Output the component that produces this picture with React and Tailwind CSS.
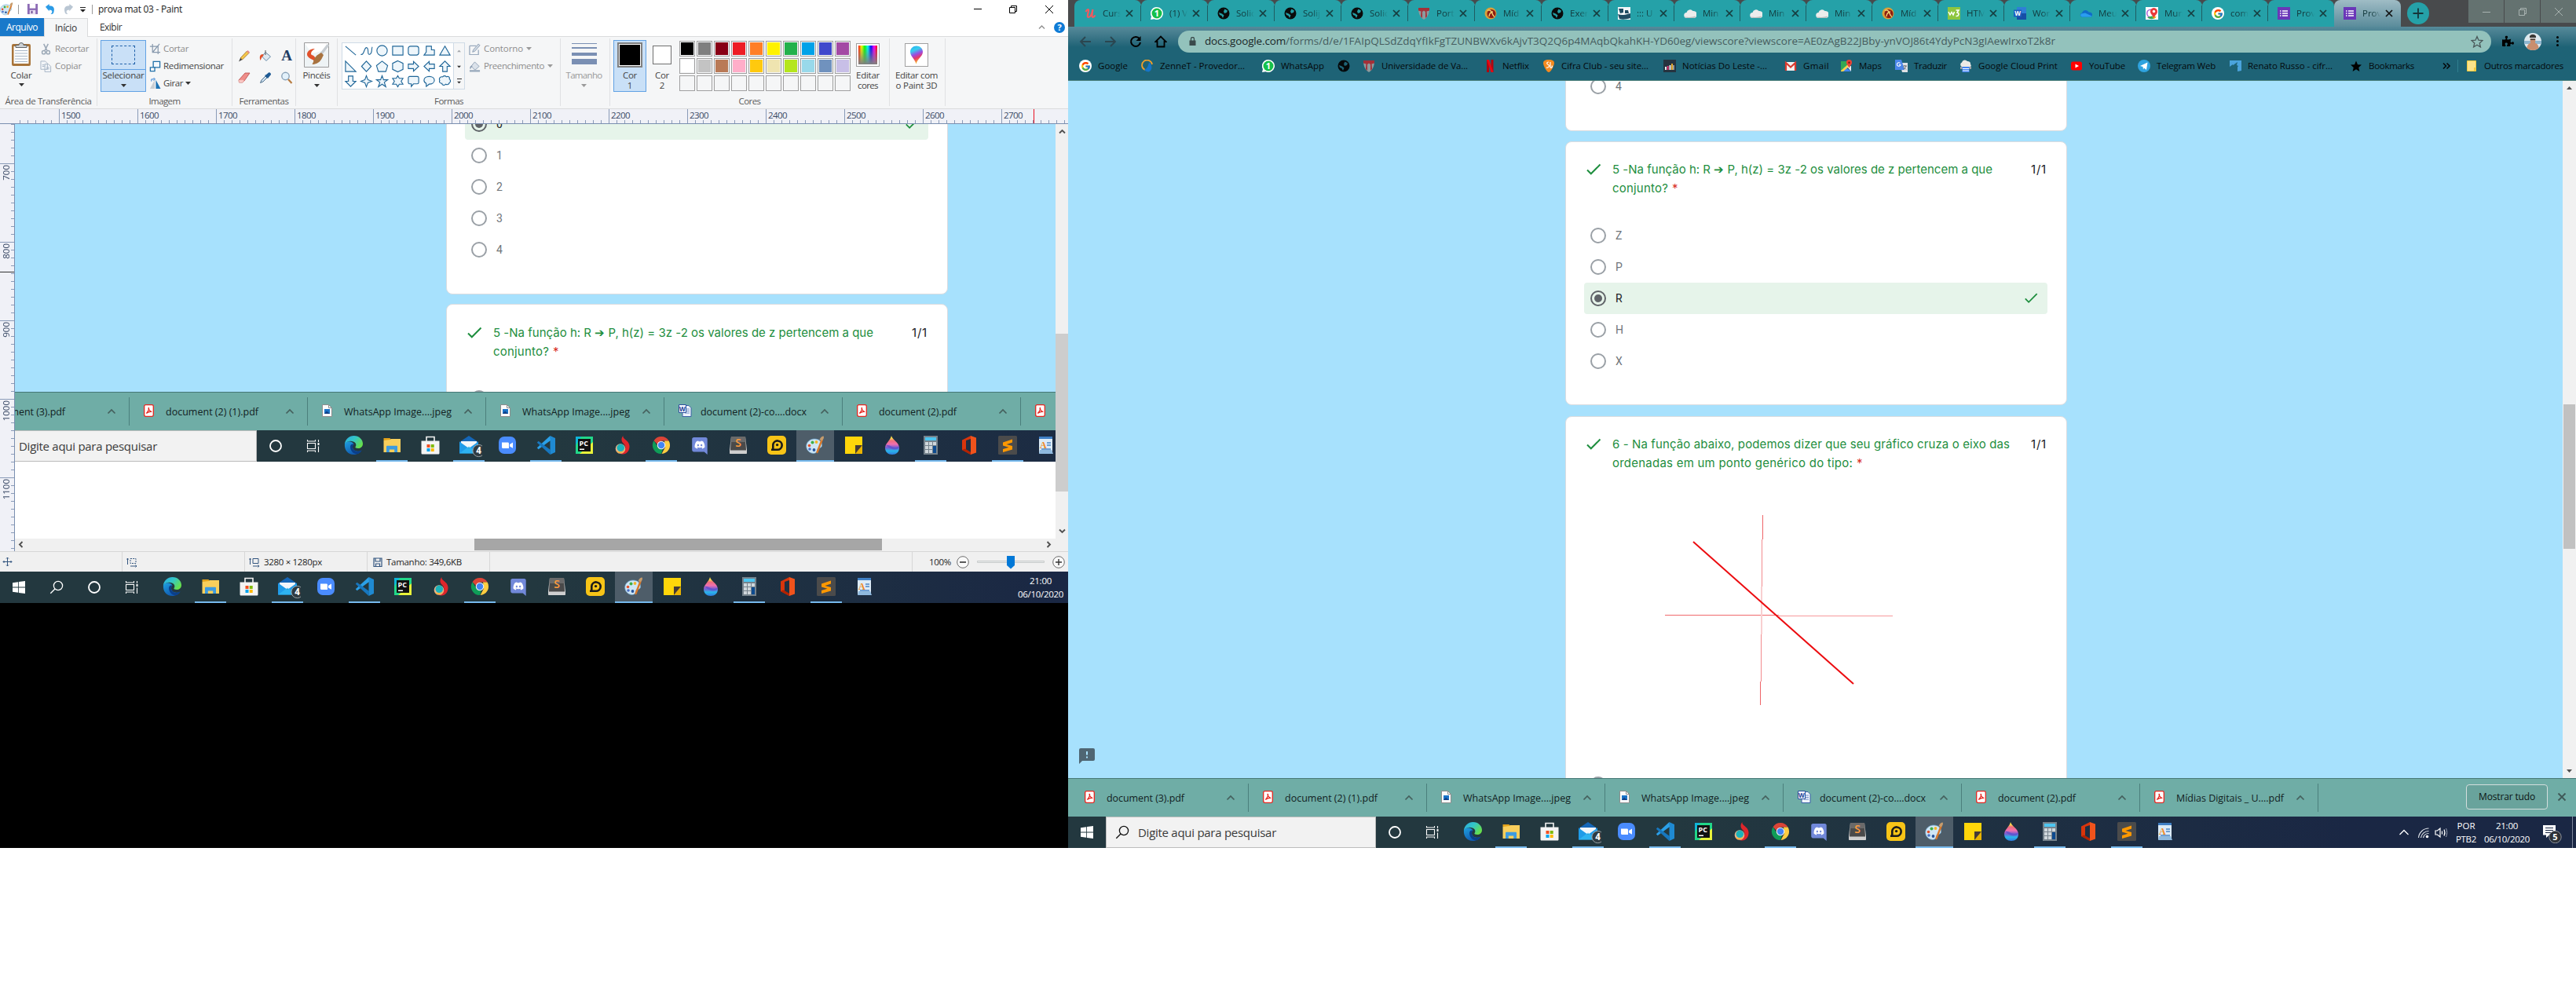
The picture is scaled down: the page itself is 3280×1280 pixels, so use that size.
import React, { useLayoutEffect, useRef, useState } from "react";
import { FcGoogle } from "react-icons/fc";
import { FaDiscord, FaPuzzlePiece } from "react-icons/fa";

/* Text that spreads its letters to occupy a given width. */
function T({ w, className = "", children }) {
  const ref = useRef(null);
  const [ls, setLs] = useState(0);
  useLayoutEffect(() => {
    if (!w) return;
    const el = ref.current;
    const natural = el.getBoundingClientRect().width;
    setLs((w - natural) / el.textContent.length);
  }, []);
  return (
    <span ref={ref} className={"block w-fit whitespace-pre " + className} style={{ letterSpacing: ls + "px" }}>
      {children}
    </span>
  );
}

const Svg = ({ s = 24, vb = 24, className = "", children }) => (
  <svg width={s} height={s} viewBox={`0 0 ${vb} ${vb}`} className={"shrink-0 " + className} fill="none">
    {children}
  </svg>
);

/* ---------- taskbar icons ---------- */
const Win = () => (
  <Svg s={16} vb={16}>
    <path fill="#fff" d="M0 2.3 7.2 1.2V7.6H0zM8 1.1 16 0v7.6H8zM0 8.4h7.2v6.4L0 13.7zM8 8.4h8V16l-8-1.1z" />
  </Svg>
);
const Search = ({ c = "#fff" }) => (
  <Svg s={18} vb={18}>
    <circle cx="11" cy="7" r="5.6" stroke={c} strokeWidth="1.3" />
    <path d="M7 11 1.3 16.8" stroke={c} strokeWidth="1.3" />
  </Svg>
);
const Cortana = () => (
  <Svg s={18} vb={18}><circle cx="9" cy="9" r="7" stroke="#fff" strokeWidth="1.8" /></Svg>
);
const TaskView = () => (
  <Svg s={18} vb={18}>
    <path d="M1.5 5.5h10v7h-10zM1.5 1v2h10V1M1.5 17v-2h10v2M15.5 1v3M15.5 9.5V17" stroke="#fff" strokeWidth="1.1" />
    <path d="M14.5 5h2v3h-2z" fill="#fff" />
  </Svg>
);
const Edge = () => (
  <Svg>
    <defs>
      <linearGradient id="eg" x1="0" y1="0" x2="1" y2="0.6"><stop stopColor="#2aa9e0" /><stop offset=".5" stopColor="#33c6c9" /><stop offset="1" stopColor="#66df4c" /></linearGradient>
      <linearGradient id="eb" x1="0" y1="0" x2="0.6" y2="1"><stop stopColor="#1fa0e0" /><stop offset="1" stopColor="#0f55ad" /></linearGradient>
    </defs>
    <path fill="url(#eb)" d="M1 10C0 18 5 24 12.5 24c4.500 0 8.300-2.300 10-5.500-4.500 2.500-11.500 1.200-11.500-4.500 0-1.500.7-2.700 1.500-3.500C9.500 6 3 6.500 1 10z" />
    <path fill="#0b3f8a" d="M8 14c0 5 4 9.500 9 9.300 2.500-.8 4.500-2.600 5.500-4.800-5 3-12 1-11.500-4.500.1-1.200.6-2.500 1.500-3.300C10 9.800 8 11.600 8 14z" />
    <path fill="url(#eg)" d="M.8 10.500C1.800 4.500 6.500 0 12.500 0 19.500 0 24 5 24 10c0 4-3 6-6 6-2.500 0-4-.9-3.600-1.700 1.300-1.500 1.200-3.300.3-4.800C12 5.800 4 5.500.8 10.500z" />
  </Svg>
);
const Folder = () => (
  <Svg>
    <path fill="#e3a21a" d="M1.500 3h8l2 3h-10z" />
    <path fill="#f9cf5c" d="M1.500 6 9.500 5l1.500-1h12v17h-21.500z" />
    <path fill="#3d9be0" d="M5 21v-7c0-.8.500-1.200 1.200-1.200h11.600c.8 0 1.200.4 1.200 1.200v7h-3.800v-3.500H8.800V21z" />
  </Svg>
);
const Store = () => (
  <Svg>
    <path d="M7 7V1.500h10V7" stroke="#f3f3f3" strokeWidth="1.6" />
    <path fill="#f4f4f4" d="M.5 6.500h23V22c0 1-.6 1.500-1.500 1.500H2c-1 0-1.500-.5-1.500-1.500z" />
    <path fill="#f25022" d="M7.500 11h4v4h-4z" /><path fill="#7fba00" d="M12.700 11h4v4h-4z" />
    <path fill="#00a4ef" d="M7.500 16h4v4h-4z" /><path fill="#ffb900" d="M12.700 16h4v4h-4z" />
  </Svg>
);
const Mail = () => (
  <Svg s={34} vb={34}>
    <path fill="#1566b7" d="M5 13 17 5l12 8v3H5z" />
    <path fill="#f2f6fa" d="M7 12h20v8H7z" />
    <path fill="#1f9be8" d="M5 12.500 17 21l12-8.500V27.500H5z" />
    <path fill="#35bdf5" d="m5 27.500 12-9 12 9z" opacity=".7" />
    <circle cx="29.500" cy="24" r="7.600" fill="#2f3b41" stroke="#9aa3a7" strokeWidth="1" />
    <text x="29.500" y="28.200" textAnchor="middle" fontFamily="Open Sans, sans-serif" fontSize="11.500" fontWeight="700" fill="#fff">4</text>
  </Svg>
);
const Zoom = () => (
  <Svg>
    <rect x="1" y="1" width="22" height="22" rx="7" fill="#4a8cff" />
    <path fill="#fff" d="M5 8.500h7.500c1 0 1.500.6 1.500 1.500v6H6.500C5.500 16 5 15.300 5 14.500zM15 11l4-2.500v7.300L15 13.500z" />
  </Svg>
);
const VSCode = () => (
  <Svg>
    <path fill="#1f8ad2" d="M17.500 0 24 3v18l-6.500 3z" />
    <path fill="#2ba0e8" d="M17.500 0 .8 15.300l1.800 2L18 6z" />
    <path fill="#1777bf" d="M17.500 24 .8 8.700l1.800-2L18 18z" />
  </Svg>
);
const PyCharm = () => (
  <Svg>
    <path fill="#21d789" d="M1 1h22v22H1z" /><path fill="#0fb5d8" d="M1 1h7L1 12z" /><path fill="#e8f23a" d="M23 8v15H6z" />
    <path fill="#111" d="M4 4h16v16H4z" /><path fill="#fff" d="M6 16.500h6V18H6z" />
    <text x="5.500" y="12.800" fontFamily="Open Sans, sans-serif" fontSize="9" fontWeight="700" fill="#fff">PC</text>
  </Svg>
);
const Torch = () => (
  <Svg>
    <path fill="#e0262b" d="M12.500 0c-1.500 4 7.500 5.500 8 13 .2 6-3.500 10.500-8.500 10.500-1.500 0-3-.4-4.200-1 8-1 9.700-8 5.200-12.500C9.500 7 10 2.500 12.500 0z" />
    <circle cx="9" cy="16.500" r="6.300" fill="#e9b48a" /><circle cx="9.300" cy="15.300" r="4.800" fill="#1bb3ba" />
    <path fill="#f6b22a" d="M4 19c3 2.500 8 2 10-1-.5 4-8.500 6-10 1z" />
  </Svg>
);
const Chrome = () => (
  <Svg>
    <path fill="#db4437" d="M12 1a11 11 0 0 1 9.600 5.500H12L7 11 2.600 6.300A11 11 0 0 1 12 1z" />
    <path fill="#ffcd40" d="M21.600 6.500A11 11 0 0 1 12.500 23l4.500-8.500-1-8z" />
    <path fill="#0f9d58" d="M2.500 6.300 8 15l6 1.500L12 23A11 11 0 0 1 2.500 6.300z" />
    <circle cx="12" cy="12" r="5.300" fill="#f1f1f1" /><circle cx="12" cy="12" r="4.200" fill="#4285f4" />
  </Svg>
);
const Discord = () => (
  <Svg>
    <path fill="#7289da" d="M4.500 2h15c1.300 0 2.200 1 2.200 2.200V24l-4-3.500H4.500C3.200 20.500 2.200 19.500 2.200 18V4.200C2.200 3 3.200 2 4.500 2z" />
    <FaDiscord x="5" y="4.500" size={14} color="#fff" />
  </Svg>
);
const SublimeOld = () => (
  <Svg>
    <path fill="#cfcfcf" d="M1 18 3 1h18l2 17v4c0 .7-.5 1-1 1H2c-.6 0-1-.4-1-1z" />
    <path fill="#4a4a4a" d="M3 1h18l1 17.500H2z" /><path fill="#6a6a6a" d="M3 1h18l.4 7H2.600z" />
    <text x="12" y="14" textAnchor="middle" fontFamily="Open Sans, sans-serif" fontSize="14" fontWeight="600" fill="#ff9a3c">S</text>
  </Svg>
);
const LDPlayer = () => (
  <Svg>
    <rect width="24" height="24" rx="5" fill="#f7c417" />
    <path d="M7.300 18.500v-7a5.700 5.700 0 1 1 5.500 6.300H5" stroke="#1b1b1b" strokeWidth="2.600" />
    <circle cx="12.600" cy="11.600" r="1.700" fill="#1b1b1b" />
  </Svg>
);
const PaintIcon = ({ s = 24 }) => (
  <Svg s={s}>
    <path fill="#cfe6f5" stroke="#6ba6cf" strokeWidth=".7" d="M11 4c6 0 10 3.500 9.500 8.500-.3 3-3 3-4.500 3.200-1.600.3-1 2.300-1.700 4.300-.7 2-4 3-7.300 2C3 20.500.700 17 .7 13 .8 8 5.500 4 11 4z" />
    <circle cx="8.500" cy="8.500" r="2" fill="#3fae49" /><circle cx="13.500" cy="8" r="1.900" fill="#f3b52a" />
    <circle cx="4.500" cy="12.500" r="1.800" fill="#e2512b" /><circle cx="5" cy="17" r="1.800" fill="#4a6fc4" /><circle cx="10.500" cy="18" r="1.900" fill="#26549c" />
    <path d="M20.500 5.500 14.500 21" stroke="#d9792b" strokeWidth="2.400" strokeLinecap="round" />
    <path d="M17.500 5c1-3 3-4.500 5.200-4.600.8 2-.2 4.600-2.500 5.900z" fill="#c69c6d" />
  </Svg>
);
const Sticky = () => (
  <Svg><path fill="#ffd60a" d="M1 1h22v11l-9 11H1z" /><path fill="#453a36" d="M14 12h9l-9 11z" /><path fill="#e9b300" d="M23 12v11h-9z" /></Svg>
);
const Drop = () => (
  <Svg>
    <defs><linearGradient id="dp" x1="0" y1="0" x2="0" y2="1"><stop offset=".12" stopColor="#ffe14a" /><stop offset=".26" stopColor="#ef6e7b" /><stop offset=".45" stopColor="#f06fb0" /><stop offset=".62" stopColor="#7b5bd0" /><stop offset=".8" stopColor="#29b6ea" /><stop offset="1" stopColor="#2f7be0" /></linearGradient></defs>
    <path fill="url(#dp)" d="M11 0c1 5 10 8.500 10 15.500 0 5-4 8.500-9 8.500s-9-3.500-9-8.500C3 10 9.500 6 11 0z" />
    <path fill="#5a50cf" opacity=".75" d="M4 12c5-2 9 6 17 1.500C21 18 12 20 4 12z" />
  </Svg>
);
const Calc = () => (
  <Svg>
    <path fill="#75828c" d="M3 0h18v24H3z" /><path fill="#4dc5f0" d="M5 2h14v4H5z" />
    <path fill="#cfd6db" d="M5 8h4v4H5zM10 8h4v4h-4zM15 8h4v4h-4zM5 13h4v4H5zM10 13h4v4h-4zM5 18h4v4H5zM10 18h4v4h-4z" />
    <path fill="#0d4a8f" d="M15 13h4v9h-4z" />
  </Svg>
);
const Office = () => (
  <Svg><path fill="#d8350c" d="M3 5.500 14 0v4L8 6v12l6 3v3L3 18z" /><path fill="#b32200" d="M3 18l4-1.500 7 4.500v3z" /><path fill="#f0531c" d="M14 0l7 2.500v19L14 24z" /></Svg>
);
const Sublime = () => (
  <Svg><rect width="24" height="24" rx="1.500" fill="#4b4b4b" /><path fill="#ff9800" d="M6 8.500 18 4.500v4L10.500 11 18 13v4.500L6 21v-4l7.500-2.300L6 12.500z" /></Svg>
);
const WordPad = () => (
  <Svg>
    <path fill="#dcebf7" d="M3 1h17v21H3z" /><path fill="#3f7fc4" d="M3 1h17v3H3z" /><path fill="#8fb9de" d="M4 18h15l2 5H3z" />
    <path d="M13 9h5M13 12h5M6 17h12" stroke="#4c86c6" strokeWidth="1.300" />
    <text x="4" y="15.500" fontFamily="Liberation Serif, serif" fontSize="12" fontWeight="700" fill="#f08a24">A</text>
  </Svg>
);

const APPS = [
  [Edge], [Folder, 1], [Store], [Mail, 1], [Zoom], [VSCode, 1], [PyCharm], [Torch], [Chrome, 1], [Discord], [SublimeOld],
  [LDPlayer], [PaintIcon, 2], [Sticky], [Drop], [Calc, 1], [Office], [Sublime, 1], [WordPad],
];
const Slot = ({ children }) => <div className="flex h-10 w-12 shrink-0 items-center justify-center">{children}</div>;

function Apps() {
  return (
    <div className="ml-[3px] flex gap-px">
      {APPS.map(([I, on], i) => (
        <div key={i} className={"flex h-10 w-12 shrink-0 flex-col items-center " + (on === 2 ? "bg-[#4e5d69]" : "")}>
          <div className="flex h-[38px] w-12 items-center justify-center"><I /></div>
          {on ? <div className={"h-[2px] bg-[#76b9ed] " + (on === 2 ? "w-12" : "w-10")} /> : null}
        </div>
      ))}
    </div>
  );
}

const Clock = () => (
  <div className="flex w-[58px] flex-col items-center text-[11.5px] leading-[17.5px] text-white">
    <T w={28}>21:00</T>
    <T w={58}>06/10/2020</T>
  </div>
);

function TaskbarWide() {
  return (
    <div className="flex h-10 w-[1920px] shrink-0 bg-linear-to-r from-[#23383f] from-40% to-[#1a2744] to-85%">
      <Slot><Win /></Slot>
      <div className="flex h-10 w-[344px] items-center border border-[#bcbcbc] bg-[#f2f2f2] pl-[11px]">
        <Search c="#111" />
        <T w={176} className="ml-[11px] text-[15px] leading-5 text-[#3a3a3a]">Digite aqui para pesquisar</T>
      </div>
      <Slot><Cortana /></Slot>
      <Slot><TaskView /></Slot>
      <Apps />
      <div className="ml-[273px] flex items-center text-white">
        <Svg s={14} vb={14}><path d="M1.500 10 7 4.500 12.500 10" stroke="#fff" strokeWidth="1.300" /></Svg>
        <Svg s={16} vb={16} className="ml-[10px]">
          <path d="M1.500 15A13 13 0 0 1 14.500 3M4.500 15A10 10 0 0 1 14.500 6.500M7.500 15a7 7 0 0 1 7-5.500" stroke="#dfe3e8" strokeWidth="1.200" />
          <circle cx="12.500" cy="13.500" r="1.800" fill="#fff" />
        </Svg>
        <Svg s={17} vb={17} className="ml-[6px]">
          <path d="M1 6h2.500L7 3v11L3.500 11H1zM9.500 6.500v4M12 4.500c1.200 2.500 1.200 5.500 0 8" stroke="#fff" strokeWidth="1.200" />
          <path d="M14.500 3c1.700 3.500 1.700 7.500 0 11" stroke="#9aa3b5" />
        </Svg>
        <div className="ml-[10px] flex w-[26px] flex-col items-center text-[11.5px] leading-[17.5px]">
          <T w={23}>POR</T>
          <T w={26}>PTB2</T>
        </div>
        <div className="ml-[10px]"><Clock /></div>
        <Svg s={28} vb={28} className="ml-[15px]">
          <path fill="#fff" d="M2 5h16v12.500H10L6 21v-3.500H2z" /><path d="M5 8.500h10M5 11.500h10M5 14.500h7" stroke="#1a2744" />
          <circle cx="17.500" cy="20" r="7.700" fill="#2c3036" stroke="#8c919b" />
          <text x="17.500" y="24" textAnchor="middle" fontFamily="Open Sans, sans-serif" fontSize="11" fontWeight="700" fill="#fff">5</text>
        </Svg>
      </div>
      <div className="ml-auto mr-[4px] h-10 w-px bg-[#7d869a]" />
    </div>
  );
}

/* ---------- download bar ---------- */
const Pdf = () => (
  <svg width="13" height="16" viewBox="0 0 13 16" fill="none" className="shrink-0">
    <rect x=".7" y=".7" width="11.600" height="14.600" rx="1.800" fill="#fff" stroke="#e5251f" strokeWidth="1.300" />
    <path d="M6.300 4c1.200 2-1.500 6-3 7.500M6.300 4c-1 1.500 1.500 5 4 5.500-2.300-.6-4.500 0-7 2" stroke="#e5251f" strokeWidth="1.200" />
  </svg>
);
const Jpeg = () => (
  <svg width="13" height="16" viewBox="0 0 13 16" fill="none" className="shrink-0">
    <path d="M.5.500h8l4 4v11H.5z" fill="#fbfbfb" stroke="#8d8d8d" /><path d="M8.500.5v4h4" stroke="#8d8d8d" />
    <path fill="#1a73c8" d="M3 6h7v6H3z" /><path fill="#123f86" d="M3 12l3-3.500L10 12z" />
  </svg>
);
const Docx = () => (
  <svg width="17" height="16" viewBox="0 0 17 16" fill="none" className="shrink-0">
    <path d="M5 1.500h8l3 3V15.500H5z" fill="#eef3fb" stroke="#3a5fa6" /><path d="M8 6h6M8 8.500h6M8 11h6" stroke="#6d8cc7" />
    <path d="M.5.500h9v10h-9z" fill="#f6f9ff" stroke="#2b4f9c" />
    <text x="1" y="8.500" fontFamily="Open Sans, sans-serif" fontSize="8" fontWeight="700" fill="#1f4396">W</text>
  </svg>
);
const FILES = [
  [Pdf, "document (3).pdf", 99], [Pdf, "document (2) (1).pdf", 118], [Jpeg, "WhatsApp Image....jpeg", 137], [Jpeg, "WhatsApp Image....jpeg", 137],
  [Docx, "document (2)-co....docx", 135], [Pdf, "document (2).pdf", 99], [Pdf, "Mídias Digitais _ U....pdf", 137],
];
function Downloads() {
  return (
    <div className="flex h-[49px] w-[1920px] shrink-0 border-t border-[#467876] bg-[#6fada6] pl-[3px]">
      {FILES.map(([I, name, w], i) => (
        <div key={i} className="mt-[6px] flex h-9 w-[227px] shrink-0 border-r border-[#4b7f7c] pt-[9px]">
          <div className="ml-[18px] w-7 shrink-0"><I /></div>
          <div className="w-[152px] shrink-0"><T w={w} className="text-[12.5px] leading-[20px] text-[#12211f]">{name}</T></div>
          <Svg s={12} vb={12} className="mt-[3px]"><path d="M1.500 8.500 6 4l4.500 4.500" stroke="#45605d" strokeWidth="1.700" /></Svg>
        </div>
      ))}
      <div className="ml-[188px] mt-[7px] flex h-8 w-[104px] items-center justify-center rounded border border-[#d3dedd] bg-[#69a39c]">
        <T w={72} className="text-[12px] leading-5 text-[#0b1413]">Mostrar tudo</T>
      </div>
      <Svg s={12} vb={12} className="ml-[12px] mt-[17px]"><path d="m1.500 1.500 9 9m0-9-9 9" stroke="#3f5957" strokeWidth="1.900" /></Svg>
    </div>
  );
}

/* ---------- form ---------- */
const Check = ({ className = "" }) => (
  <svg width="24" height="24" viewBox="0 0 24 24" fill="none" className={"shrink-0 " + className}>
    <path d="M4 12.500 8.800 17.300 20.500 5.500" stroke="#1e8e3e" strokeWidth="2" />
  </svg>
);
function Option({ label, on }) {
  return (
    <div className={"flex h-10 w-[590px] items-center rounded pl-2 pr-[9px] " + (on ? "bg-[#e6f4ea]" : "")}>
      <div className={"flex size-5 items-center justify-center rounded-full border-2 " + (on ? "border-[#5f6368]" : "border-[#9aa0a6]")}>
        {on ? <div className="size-[10px] rounded-full bg-[#5f6368]" /> : null}
      </div>
      <span className={"ml-3 font-[Roboto,sans-serif] text-[14px] leading-5 " + (on ? "text-[#202124]" : "text-[#70757a]")}>{label}</span>
      {on ? <Check className="ml-auto scale-90" /> : null}
    </div>
  );
}
function Question({ a, wa, b, wb }) {
  return (
    <div className="flex h-12 font-[Inter,sans-serif] text-[15px] leading-6 text-[#1e8e3e]">
      <Check />
      <div className="ml-3 w-[510px]">
        <T w={wa} className="h-6">{a}</T>
        <div className="flex h-6"><T w={wb}>{b}</T><span className="ml-[5px] text-[#d93025]">*</span></div>
      </div>
      <T w={20} className="ml-[23px] text-[#202124]">1/1</T>
    </div>
  );
}
const CARD = "w-[639px] rounded-lg border border-[#dadce0] bg-white pl-[23px]";
const Q5 = () => <Question a="5 -Na função h: R ➔ P, h(z) = 3z -2 os valores de z pertencem a que" wa={484} b="conjunto?" wb={71} />;

/* ---------- Paint ---------- */
const Tri = ({ c = "#333", className = "" }) => (
  <svg width="7" height="4" viewBox="0 0 7 4" className={"shrink-0 " + className}><path d="M0 0h7L3.500 4z" fill={c} /></svg>
);
const PT = ({ w, c = "text-[#444]", children }) => <T w={w} className={"text-[11.5px] leading-[14px] " + c}>{children}</T>;

const SHAPES = [
  "M2 3 16 15", "M1.500 14C6 16 6 4 9.500 5s0 10 4 9 2-8 3.500-10", "M2 9a7 7 0 1 0 14 0A7 7 0 1 0 2 9z", "M2 3h14v12H2z",
  "M5 3h8a3 3 0 0 1 3 3v6a3 3 0 0 1-3 3H5a3 3 0 0 1-3-3V6a3 3 0 0 1 3-3z", "M5 3h7v5h4v7H2l3-4z", "M9 3l7 12H2z",
  "M2 2v14h14z", "M9 2l6.500 7L9 16 2.500 9z", "M9 2l7.500 6-2.500 8H4L1.500 8z", "M9 1.500 16 5v8l-7 3.500L2 13V5z", "M2 6h7V2.500L16 9l-7 6.500V12H2z",
  "M16 6H9V2.500L2 9l7 6.500V12h7z", "M6 16V9H2l7-7 7 7h-4v7z",
  "M6 2v7H2l7 7 7-7h-4V2z", "M9 1.500 11 7l5.500 2L11 11l-2 5.500L7 11 1.500 9 7 7z", "M9 1.500l2 5.500h5.500L12 10.500l2 6L9 13l-5 3.500 2-6L1.500 7H7z",
  "M9 1.500l2 3.500h5L13.500 9 16 13h-5l-2 3.500L7 13H2l2.500-4L2 5h5z", "M4 2.500h10a2 2 0 0 1 2 2v6a2 2 0 0 1-2 2H9L6 16v-3.500H4a2 2 0 0 1-2-2v-6a2 2 0 0 1 2-2z",
  "M9 2.500c4 0 7 2.200 7 5.200s-3 5.200-7 5.200L5 16v-4C3 11 2 9.500 2 7.700c0-3 3-5.200 7-5.200z",
  "M6 3c2-2 4-1 5 0 2-1 5 0 4 3 2 1.500 2 4 0 5-.5 2.500-3 3-5 2-2 2-5 1.500-5-1-3-.5-4-2-3-4-1.500-3 1-5.500 4-5z",
];
const PAL = ["#000000", "#7f7f7f", "#880015", "#ed1c24", "#ff7f27", "#fff200", "#22b14c", "#00a2e8", "#3f48cc", "#a349a4",
  "#ffffff", "#c3c3c3", "#b97a57", "#ffaec9", "#ffc90e", "#efe4b0", "#b5e61d", "#99d9ea", "#7092be", "#c8bfe7"];

const Group = ({ className, label, lw, children }) => (
  <div className={"flex h-[91px] shrink-0 flex-col items-center " + className}>
    <div className="h-[75px] w-full">{children}</div>
    {label ? <PT w={lw} c="text-[#5a5a5a]">{label}</PT> : null}
  </div>
);
const Sep = () => <div className="mt-[2px] h-[86px] w-px shrink-0 bg-[#e0e1e3]" />;
const Thumb = ({ children }) => <div className="flex size-[30px] shrink-0 items-center justify-center border border-[#a0a0a0] bg-white p-[2px]">{children}</div>;

function Ribbon() {
  return (
    <div className="flex h-[91px] bg-[#f5f6f7]">
      <Group className="w-[123px]" label="Área de Transferência" lw={110}>
        <div className="flex">
          <div className="ml-[9px] flex w-9 flex-col items-center pt-[6px]">
            <svg width="26" height="32" viewBox="0 0 26 32" fill="none">
              <rect x="1" y="3" width="24" height="28" rx="2" fill="#a8743a" /><path fill="#fdfdfd" d="M3.500 6h19v22h-19z" />
              <path d="M5 11.500h16M5 15h16M5 18.500h16M5 22h16M5 25.500h16" stroke="#a9b7c7" strokeWidth="1" /><path d="M6 7.500V4.500h4a3 3 0 0 1 6 0h4v3z" fill="#cfd3d6" stroke="#5f6569" />
            </svg>
            <div className="mt-[4px]"><PT w={27}>Colar</PT></div>
            <Tri className="mt-[3px]" />
          </div>
          <div className="ml-[6px] flex flex-col pt-[4px]">
            <div className="flex h-[22px] items-center gap-[4px]">
              <Svg s={15} vb={16}><path d="M5 1l4.500 9M11 1 6.500 10" stroke="#9aa7b5" strokeWidth="1.600" /><circle cx="5" cy="12.500" r="2.300" stroke="#9aa7b5" strokeWidth="1.500" /><circle cx="11" cy="12.500" r="2.300" stroke="#9aa7b5" strokeWidth="1.500" /></Svg>
              <PT w={43} c="text-[#8d8d8d]">Recortar</PT>
            </div>
            <div className="flex h-[22px] items-center gap-[4px]">
              <Svg s={15} vb={16}><path d="M1 1h6l3 3v8H1zM6.500 5h5l3 3v7.500h-8z" fill="#f2f5f8" stroke="#a5b3c4" /><path d="M8.500 9.500h4M8.500 11.500h4M3 6h3M3 8h3" stroke="#a5b3c4" /></Svg>
              <PT w={34} c="text-[#8d8d8d]">Copiar</PT>
            </div>
          </div>
        </div>
      </Group>
      <Sep />
      <Group className="w-[171px]" label="Imagem" lw={40}>
        <div className="flex">
          <div className="ml-[4px] mt-[4px] flex h-[66px] w-[58px] flex-col items-center border border-[#62a2e4] bg-[#c9e0f7]">
            <div className="flex h-[37px] w-full shrink-0 items-center justify-center border-b border-[#62a2e4]">
              <div className="h-6 w-[30px] border border-dashed border-[#1d5fa8]" />
            </div>
            <div className="mt-0"><PT w={53}>Selecionar</PT></div>
            <Tri className="mt-[4px]" />
          </div>
          <div className="ml-[4px] flex flex-col pt-[4px]">
            <div className="flex h-[22px] items-center gap-[3px]">
              <Svg s={15} vb={16}><path d="M4.500 1v11.500H15M1 4.500h11V15M14 1 5 12" stroke="#8899ad" strokeWidth="1.300" /></Svg><PT w={32} c="text-[#8d8d8d]">Cortar</PT>
            </div>
            <div className="flex h-[22px] items-center gap-[3px]">
              <Svg s={15} vb={16}><path d="M5.500 1.500h9v8h-9z" fill="#f4f9fd" stroke="#2170a8" strokeWidth="1.400" /><path d="M1.500 9.500h6v5h-6z" fill="#fff" stroke="#2170a8" strokeWidth="1.400" /></Svg><PT w={77}>Redimensionar</PT>
            </div>
            <div className="flex h-[22px] items-center gap-[3px]">
              <Svg s={15} vb={16}><path d="M7.500 3 1 15h6.500z" fill="#c9ced3" /><path d="M9 3v12h6.500z" fill="#1f74b5" /><path d="M3 5V2h4M6 0l2 2-2 2" stroke="#2b7cd3" /></Svg><PT w={25}>Girar</PT><Tri />
            </div>
          </div>
        </div>
      </Group>
      <Sep />
      <Group className="w-[80px]" label="Ferramentas" lw={63}>
        <div className="grid grid-cols-3 gap-x-2 gap-y-3 pl-[7px] pt-[16px]">
          <Svg s={16} vb={16}><path d="m3 11 8.500-9 2.500 2.500L5.500 13z" fill="#f6c84c" stroke="#9b6b1e" strokeWidth=".8" /><path d="M3 11 1 15.500 5.500 13z" fill="#444" /><path d="m11 2.500 1.500-1.500 2.500 2.500L13.500 5z" fill="#e58b8b" /></Svg>
          <Svg s={16} vb={16}><path d="M8 3.500 14.500 9 9 14.500 3.500 9z" fill="#dfe8f0" stroke="#6689a8" /><path d="M8 1v6" stroke="#555" /><path d="M5 6C1 6 0 9 1.500 14c1.500-2 1-4 4-6z" fill="#e2512b" /></Svg>
          <span className="flex size-4 items-center justify-center font-['Liberation_Serif',serif] text-[19px] font-bold leading-4 text-[#1f3d63]">A</span>
          <Svg s={16} vb={16}><path d="m1 11 8-9h6l-7 10-2 2H1.500z" fill="#ef8e8a" stroke="#b64a48" strokeWidth=".8" /><path d="m1 11 5-.3L8 12l-2 2H1.500z" fill="#f8c6c2" /></Svg>
          <Svg s={16} vb={16}><path d="M1.500 14.500 3 11l5-5 2 2-5 5z" fill="#cfe2f1" stroke="#4d6f8c" /><path d="m7 5 4 4 1.500-2L15 4c0-2-1.500-3-3-2.500L9 4z" fill="#1d5a94" /></Svg>
          <Svg s={16} vb={16}><circle cx="6.500" cy="6" r="4.700" fill="#e3f1fb" stroke="#8aa2b8" strokeWidth="1.400" /><path d="m10 10 4.500 5" stroke="#b77d43" strokeWidth="2.200" /></Svg>
        </div>
      </Group>
      <Sep />
      <Group className="w-[52px]">
        <div className="flex flex-col items-center pt-[7px]">
          <svg width="32" height="32" viewBox="0 0 32 32" fill="none">
            <path d="M.5.500h31v31H.5z" fill="#eef3f5" stroke="#9b9b9b" /><path d="M1 1h30v8L10 14z" fill="#fff" />
            <path d="M14 8C6 8 2 14 5 18s8 3 9 8c2-5 0-9-4-10-2-1-1-5 4-8z" fill="#e2512b" /><path d="M31 3 20 17" stroke="#c7ccd1" strokeWidth="3.500" />
            <path d="M22 13 25 16 22.500 21C19 27 14 28 10.500 28c2-3 2-8 6-11.500z" fill="#a87340" />
          </svg>
          <div className="mt-[3px]"><PT w={35}>Pincéis</PT></div>
          <Tri className="mt-[4px]" />
        </div>
      </Group>
      <Sep />
      <Group className="w-[283px]" label="Formas" lw={37}>
        <div className="flex">
          <div className="ml-[5px] mt-[7px] flex h-[60px] w-[157px] border border-[#cfdbe6] bg-white">
            <div className="grid w-[141px] grid-cols-7 content-start">
              {SHAPES.map((d, i) => (
                <div key={i} className="flex h-[19.5px] items-center justify-center">
                  <Svg s={17} vb={18}><path d={d} fill={i < 2 ? "none" : "#eef6fb"} stroke="#1f6698" strokeWidth="1.200" /></Svg>
                </div>
              ))}
            </div>
            <div className="flex w-[14px] flex-col items-center border-l border-[#cfdbe6] bg-[#f5f6f7]">
              <Tri c="#a3a7ab" className="mt-[8px] rotate-180 scale-75" />
              <Tri className="mt-[16px] scale-75" />
              <div className="mt-[13px] h-px w-[6px] bg-[#333]" />
              <Tri className="mt-[2px] scale-75" />
            </div>
          </div>
          <div className="ml-[5px] flex flex-col pt-[4px]">
            <div className="flex h-[22px] items-center gap-[4px]">
              <Svg s={15} vb={16}><path d="M1 3.500h9M1 3.500v12h12V9" stroke="#9aaabd" strokeWidth="1.400" /><path d="m5 12 1-3 7-8 2 2-7 8z" fill="#cfd8e2" stroke="#8fa0b4" /></Svg><PT w={50} c="text-[#8d8d8d]">Contorno</PT><Tri c="#9a9a9a" />
            </div>
            <div className="flex h-[22px] items-center gap-[4px]">
              <Svg s={15} vb={16}><path d="M8 2 14 8 8.500 13 3 8z" fill="#dbe2ea" stroke="#8fa0b4" /><path d="M1 13h14v2.500H1z" fill="#9aaabd" /><path d="M4 7C1 8 1 10 2 12c1-1 1-3 3-4z" fill="#8fa0b4" /></Svg><PT w={77} c="text-[#8d8d8d]">Preenchimento</PT><Tri c="#9a9a9a" />
            </div>
          </div>
        </div>
      </Group>
      <Sep />
      <Group className="w-[62px]">
        <div className="flex flex-col items-center pr-[3px] pt-[8px]">
          <div className="h-px w-8 bg-[#7a8fb3]" /><div className="mt-[4px] h-[2px] w-8 bg-[#7a8fb3]" />
          <div className="mt-[5px] h-1 w-8 bg-[#7a8fb3]" /><div className="mt-[4px] h-[7px] w-8 bg-[#7a8fb3]" />
          <div className="mt-[7px]"><PT w={46} c="text-[#9a9a9a]">Tamanho</PT></div>
          <Tri c="#9a9a9a" className="mt-[4px]" />
        </div>
      </Group>
      <Sep />
      <Group className="w-[355px]" label="Cores" lw={28}>
        <div className="flex">
          <div className="ml-[4px] mt-[4px] flex h-[66px] w-[42px] flex-col items-center border border-[#62a2e4] bg-[#c9e0f7] pt-[2px]">
            <div className="size-8 shrink-0 border-2 border-[#7f7f7f] bg-white p-px"><div className="size-full bg-black" /></div>
            <div className="mt-[3px]"><PT w={18}>Cor</PT></div>
            <div className="-mt-px"><PT>1</PT></div>
          </div>
          <div className="ml-[8px] mt-[11px] flex w-6 flex-col items-center">
            <div className="size-6 shrink-0 border border-[#6f6f6f] bg-white" />
            <div className="mt-[7px]"><PT w={18}>Cor</PT></div>
            <div className="-mt-px"><PT>2</PT></div>
          </div>
          <div className="ml-[10px] mt-[5px] grid w-[218px] grid-cols-10 content-start gap-[2px]">
            {Array.from({ length: 30 }, (_, i) => (
              <div key={i} className="size-5 border border-[#a0a0a0] bg-[#f5f6f7] p-px">
                {PAL[i] ? <div className="size-4" style={{ backgroundColor: PAL[i] }} /> : null}
              </div>
            ))}
          </div>
          <div className="ml-[4px] flex w-9 flex-col items-center pt-[8px]">
            <Thumb><div className="h-full w-full bg-[linear-gradient(90deg,#f00,#ff0,#0f0,#0ff,#00f,#f0f,#f00)]"><div className="h-full w-full bg-linear-to-b from-transparent to-[#808080]" /></div></Thumb>
            <div className="mt-[4px]"><PT w={30}>Editar</PT></div>
            <div className="-mt-px"><PT w={26}>cores</PT></div>
          </div>
        </div>
      </Group>
      <Sep />
      <Group className="w-[70px]">
        <div className="flex flex-col items-center pr-[2px] pt-[8px]">
          <Thumb>
            <Svg s={26} vb={26}>
              <defs><linearGradient id="p3" x1="0" y1="0" x2=".3" y2="1"><stop stopColor="#2aa6f0" /><stop offset=".3" stopColor="#35d0ee" /><stop offset=".55" stopColor="#9b4be0" /><stop offset=".75" stopColor="#e53a6a" /><stop offset="1" stopColor="#f8b429" /></linearGradient></defs>
              <path fill="url(#p3)" d="M13 1.500c4.500 0 8 3.300 8 7.500 0 6-6.500 8-8.500 15.500C11 18 5 15 5 9c0-4.200 3.500-7.500 8-7.500z" />
            </Svg>
          </Thumb>
          <div className="mt-[4px]"><PT w={54}>Editar com</PT></div>
          <div className="-mt-px"><PT w={53}>o Paint 3D</PT></div>
        </div>
      </Group>
      <Sep />
    </div>
  );
}

const range = (a, n) => Array.from({ length: n }, (_, i) => a + i * 100);
function HRuler() {
  return (
    <div className="relative h-[19px] overflow-hidden border-b border-[#7a8fb0] bg-[#f0f1f7] pl-[19px]">
      <div className="h-[18px] overflow-hidden">
        <div className="-ml-[44px] flex">
          {range(1400, 14).map((n) => (
            <div key={n} className="h-[18px] w-[100px] shrink-0 border-l border-[#8a9bb8]">
              <div className="h-[14px] pl-[2px]">{n > 1400 ? <T w={24} className="text-[11.5px] leading-[16px] text-[#3a4a66]">{n}</T> : null}</div>
              <div className="-ml-px flex">{range(0, 10).map((k) => <div key={k} className="h-1 w-[10px] border-l border-[#8a9bb8]" />)}</div>
            </div>
          ))}
        </div>
      </div>
      <div className="absolute left-[1316px] top-0 h-[18px] w-px bg-[#e81123]" />
    </div>
  );
}
function VRuler() {
  return (
    <div className="relative h-[544px] w-[19px] shrink-0 overflow-hidden border-r border-[#7a8fb0] bg-[#f0f1f7]">
      <div className="-mt-[50px] flex flex-col">
        {range(600, 6).map((n) => (
          <div key={n} className="flex h-[100px] w-[18px] shrink-0 border-t border-[#8a9bb8]">
            <div className="w-[14px] pt-[1px]">
              {n > 600 ? <T className="rotate-180 text-[11.5px] leading-[15px] text-[#3a4a66] [writing-mode:vertical-rl]">{n}</T> : null}
            </div>
            <div className="-mt-px">{range(0, 10).map((k) => <div key={k} className="h-[10px] w-1 border-t border-[#8a9bb8]" />)}</div>
          </div>
        ))}
      </div>
      <div className="absolute left-0 top-[188px] h-px w-[18px] bg-[#333]" />
    </div>
  );
}

function PaintCanvas() {
  return (
    <div className="h-[528px] w-[1325px] overflow-hidden bg-white">
      <div className="h-[341px] overflow-hidden bg-[#a7e1fd] pl-[549px]">
        <div className={CARD + " -mt-[21px] h-[238px]"}>
          <Option label="0" on />
          {["1", "2", "3", "4"].map((l) => <Option key={l} label={l} />)}
        </div>
        <div className={CARD + " mt-3 h-[336px] pt-[24px]"}>
          <Q5 />
          <div className="mt-[27px]"><Option label="" /></div>
        </div>
      </div>
      <div className="-ml-[84px]"><Downloads /></div>
      <div className="-ml-[84px]"><TaskbarWide /></div>
    </div>
  );
}
const Arrow = ({ r = "", c = "#505050" }) => (
  <Svg s={11} vb={11} className={r}><path d="M2 7.500 5.500 4 9 7.500" stroke={c} strokeWidth="1.900" /></Svg>
);

function Status() {
  const cell = "flex h-[25px] shrink-0 items-center border-r border-[#d7d7d7]";
  const ic = "#33557f";
  return (
    <div className="flex h-[26px] border-t border-[#d7d7d7] bg-[#f0f0f0] text-[11.5px] text-[#1e1e1e]">
      <div className={cell + " w-[156px] pl-[3px]"}><Svg s={13} vb={13}><path d="M6.500 1v11M1 6.500h11M5 2.500 6.500 1 8 2.500M5 10.500 6.500 12 8 10.500M2.500 5 1 6.500 2.500 8M10.500 5 12 6.500 10.500 8" stroke={ic} /></Svg></div>
      <div className={cell + " w-[156px] pl-[5px]"}><Svg s={14} vb={14}><path d="M5 2.500h7v6H5z" stroke={ic} strokeDasharray="2 1.200" /><path d="M1.500 2v8M.5 3.500l1-1.500 1 1.500M5 12h8M11.500 10.500 13 12l-1.500 1.500" stroke={ic} /></Svg></div>
      <div className={cell + " w-[156px] gap-[5px] pl-[5px]"}><Svg s={14} vb={14}><path d="M5 2.500h7v6H5z" stroke={ic} /><path d="M1.500 2v8M.5 3.500l1-1.500 1 1.500M5 12h8M11.500 10.500 13 12l-1.500 1.500" stroke={ic} /></Svg><T w={74}>3280 × 1280px</T></div>
      <div className={cell + " w-[156px] gap-[5px] pl-[7px]"}><Svg s={12} vb={12}><path d="M1 1h10v10.500H1zM3 1v4h6V1M3.500 11.500V8h5v3.500" stroke={ic} strokeWidth="1.200" /></Svg><T w={96}>Tamanho: 349,6KB</T></div>
      <div className={cell + " w-[538px]"} />
      <div className="flex items-center pl-[21px]">
        <T w={28}>100%</T>
        <Svg s={16} vb={16} className="ml-[7px]"><circle cx="8" cy="8" r="7.300" fill="#fafafa" stroke="#6d6d6d" /><path d="M4 8h8" stroke="#333" strokeWidth="1.600" /></Svg>
        <svg width="86" height="18" viewBox="0 0 86 18" className="ml-[10px]"><path d="M.5 7.500h85v2H.5z" fill="#e7eaea" stroke="#c8cccc" /><path d="M38 1h10v12l-5 4.500L38 13z" fill="#0078d7" /></svg>
        <Svg s={16} vb={16} className="ml-[10px]"><circle cx="8" cy="8" r="7.300" fill="#fafafa" stroke="#6d6d6d" /><path d="M4 8h8M8 4v8" stroke="#333" strokeWidth="1.400" /></Svg>
      </div>
    </div>
  );
}

function PaintWindow() {
  return (
    <div className="h-[728px] bg-white">
      <div className="flex h-[23px] items-center text-[12px] text-[#1b1b1b]">
        <PaintIcon s={17} />
        <div className="ml-[6px] h-3 w-px bg-[#9a9a9a]" />
        <Svg s={15} vb={16} className="ml-[10px]"><path d="M1 1h14v14H1z" fill="#8d6bb5" /><path fill="#fff" d="M4 1h8v6H4z" /><path fill="#e6ddf0" d="M4 9.500h8V15H4z" /><path d="M6 10.500h2V14H6z" fill="#6a4a94" /></Svg>
        <Svg s={15} vb={16} className="ml-[8px]"><path d="M1 5 6 1v2.500c6 0 8 3 6 9.500-.8 1.500-2 2-4 2 3-2.500 3-6-2-6V11z" fill="#2b9be6" /></Svg>
        <Svg s={15} vb={16} className="ml-[7px]"><path d="M15 5 10 1v2.500c-6 0-8 3-6 9.500.8 1.500 2 2 4 2-3-2.500-3-6 2-6V11z" fill="#b9c6d3" /></Svg>
        <svg width="7" height="7" viewBox="0 0 7 7" className="ml-[8px] mt-[2px]"><path d="M0 0h7v1H0zM0 3h7L3.500 6.500z" fill="#222" /></svg>
        <div className="ml-[8px] h-3 w-px bg-[#9a9a9a]" />
        <T w={107} className="ml-[7px]">prova mat 03 - Paint</T>
        <Svg s={12} vb={12} className="ml-[1007px]"><path d="M1 5.500h10" stroke="#000" /></Svg>
        <Svg s={12} vb={12} className="ml-[33px]"><path d="M1.500 3.500h7v7h-7zM3.500 3.500v-2h7v7h-2" stroke="#000" /></Svg>
        <Svg s={12} vb={12} className="ml-[34px]"><path d="m1 1 10 10m0-10L1 11" stroke="#000" /></Svg>
      </div>
      <div className="flex h-6 border-b border-[#dadbdc] text-[12px] leading-[23px]">
        <div className="flex w-14 justify-center bg-[#1979ca] text-white"><T w={40}>Arquivo</T></div>
        <div className="flex h-6 w-14 justify-center border border-b-0 border-[#dadbdc] bg-[#f5f6f7] text-[#333]"><T w={28}>Início</T></div>
        <T w={28} className="ml-[15px] text-[#333]">Exibir</T>
        <div className="ml-auto flex items-center">
          <Svg s={11} vb={11} className="mr-[10px]"><path d="M2 7.500 5.500 4 9 7.500" stroke="#8f8f8f" strokeWidth="1.400" /></Svg>
          <div className="mr-[4px] flex size-[14px] items-center justify-center rounded-full bg-[#0f7bd6] text-[11px] font-bold leading-none text-white">?</div>
        </div>
      </div>
      <Ribbon />
      <div className="h-px bg-[#dadbdc]" />
      <HRuler />
      <div className="flex h-[544px]">
        <VRuler />
        <div className="w-[1325px] shrink-0">
          <PaintCanvas />
          <div className="flex h-4 items-center bg-[#f0f0f0] pb-px">
            <Arrow r="ml-[2px] -rotate-90" />
            <div className="ml-[572px] h-[15px] w-[519px] bg-[#a6a6a6]" />
            <Arrow r="ml-[207px] rotate-90" />
          </div>
        </div>
        <div className="flex w-4 flex-col items-center bg-[#f0f0f0] pt-[4px]">
          <Arrow />
          <div className="mt-[252px] h-[201px] w-4 bg-[#cdcdcd]" />
          <Arrow r="mt-[45px] rotate-180" />
        </div>
      </div>
      <Status />
    </div>
  );
}

/* ---------- Chrome ---------- */
const Udemy = () => <Svg s={16} vb={16}><path d="M2.500 6C4 3 6.500 2 6 5s-2.500 8 0 8c2.500 0 4.500-5 5.500-10-1 5-1.500 10 0 10 1 0 2-1 3-2.500" stroke="#f05a5f" strokeWidth="2.200" /></Svg>;
const Whats = () => (
  <Svg s={16} vb={16}><path fill="#fff" d="M8 0a8 8 0 1 1-3.500 15.200L0 16l1-4A8 8 0 0 1 8 0z" /><circle cx="8" cy="8" r="6.500" fill="#15c04b" />
    <text x="8" y="12" textAnchor="middle" fontFamily="Open Sans, sans-serif" fontSize="11" fontWeight="700" fill="#fff">1</text></Svg>
);
const Globe = () => <Svg s={16} vb={16}><circle cx="8" cy="8" r="7.500" fill="#0a0a0a" /><path fill="#259da4" d="M9.500 2.500 13 4.500 12 7 9 8 8 5.500zM2 7l4 1.500 2.500 2L7 14 5.500 11 3 10z" /></Svg>;
const Shield = () => <Svg s={16} vb={16}><path fill="#8d9a9d" d="M1 1h14c0 7-2 12-7 15C3 13 1 8 1 1z" /><path fill="#a33038" d="M1 1h14v3.500l-3.500 1L12 12l-2 2V6L8 4.500 6 6v8l-2-2 .5-6.500L1 4.500z" /></Svg>;
const Med = () => <Svg s={16} vb={16}><circle cx="8" cy="8" r="7.500" fill="#d9a13a" /><circle cx="9" cy="8.500" r="5.500" fill="#8e1d12" /><path d="M4 4.500c3-2 5 1 6 3.500s2 4 3 4M6 12c0-4 3-6 5-6" stroke="#f7d774" strokeWidth="1.400" /></Svg>;
const Ship = () => <Svg s={16} vb={16}><path fill="#f2f6f8" d="M0 0h16v16H0z" /><path fill="#1f4c63" d="M0 9c5 2 9 1 16-1v6c-6 2-11 2-14 1zM1 2h6v5l-4 1zM9 4h4l1 4H9z" /></Svg>;
const Cloud = () => <Svg s={16} vb={16}><path fill="#ececec" d="M4 14a3.500 3.500 0 0 1-.5-7 4.500 4.500 0 0 1 8-2 3.500 3.500 0 0 1 1.500 9z" /><path fill="#b9bdbd" d="M1 12c3 1.500 10 1 14-.5-.5 1.500-1 2.500-2.500 2.500H4c-1.300 0-2.300-.7-3-2z" /></Svg>;
const W3 = () => <Svg s={16} vb={16}><path fill="#8dc63f" d="M0 0h16v16H0z" /><path d="M1 6l2 4 2-3.500L7 10l1.500-4M10.500 4H14l-2 3c3 .5 2.500 5-1.500 4.500" stroke="#fff" strokeWidth="1.500" /></Svg>;
const WordIc = () => <Svg s={16} vb={16}><path fill="#2f7fd6" d="M4 0h12v16H4z" /><path fill="#174ea6" d="M4 8h12v8H4z" /><path fill="#1b5ebe" d="M0 3.500h10v9H0z" /><text x="5" y="11" textAnchor="middle" fontFamily="Open Sans, sans-serif" fontSize="8" fontWeight="700" fill="#fff">W</text></Svg>;
const OneDrive = () => <Svg s={16} vb={16}><path fill="#0f6cc9" d="M3 12.500C0 12 0 8 3 7.500 4.500 3 10 3 11.500 6.500c3-.5 5 1.500 4.500 4l-1 2z" /><path fill="#2a9df0" d="M3 12.500C1 12 .5 9.500 2 8.500l5-1 8.500 4c-.5.700-1 1-2 1z" /></Svg>;
const MapPin = () => <Svg s={16} vb={16}><path fill="#fff" d="M0 0h16v16H0z" /><circle cx="6.500" cy="8" r="4.800" fill="none" stroke="#a968d8" strokeWidth="1.600" /><path fill="#34a853" d="M2 13c3 3 8 3 11 0l-3-2z" /><path fill="#fbbc04" d="M8 12h6l-3 3z" /><path fill="#ea3a3a" d="M10.500 1a4.600 4.600 0 0 1 4.500 5c0 3-3 4-4.500 8C9 10 6 9 6 6a4.600 4.600 0 0 1 4.500-5z" /><circle cx="10.500" cy="5.500" r="1.700" fill="#fff" /></Svg>;
const GIcon = () => <div className="flex size-4 shrink-0 items-center justify-center rounded-full bg-white"><FcGoogle size={13} /></div>;
const Forms = () => <Svg s={16} vb={16}><path fill="#6a37b8" d="M0 0h16v16H0z" /><path d="M3 5h1.500M6 5h7M3 8h1.500M6 8h7M3 11h1.500M6 11h7" stroke="#fff" strokeWidth="1.700" /></Svg>;

const TABS = [
  [Udemy, "Curs"], [Whats, "(1) V"], [Globe, "Solic"], [Globe, "Solij"], [Globe, "Solic"], [Shield, "Port"], [Med, "Míd"], [Globe, "Exer"],
  [Ship, "::: U"], [Cloud, "Min"], [Cloud, "Min"], [Cloud, "Min"], [Med, "Míd"], [W3, "HTM"], [WordIc, "Wor"], [OneDrive, "Meu"],
  [MapPin, "Mun"], [GIcon, "com"], [Forms, "Prov"], [Forms, "Prov"],
];

function TabStrip() {
  return (
    <div className="flex h-[34px] bg-[#484a4c] pl-2">
      {TABS.map(([I, t], i) => {
        const on = i === 19;
        return (
          <div key={i} className={"flex h-[34px] shrink-0 items-center rounded-t-lg pl-3 " + (i < 8 || on ? "w-[85px] " : "w-[84px] ") + (on ? "bg-linear-to-b from-[#9fbcc5] to-[#5a8c9b]" : "bg-[#25a1a8]")}>
            <I />
            <div className="ml-2 w-[23px] shrink-0 overflow-hidden whitespace-nowrap text-[11.5px] leading-5 text-[#12393c] [mask-image:linear-gradient(90deg,#000_55%,transparent)]">{t}</div>
            <Svg s={10} vb={10} className="ml-[6px]"><path d="m1 1 8 8m0-8-8 8" stroke={on ? "#111" : "#163c3e"} strokeWidth="1.700" /></Svg>
            {on || i === 18 ? null : <div className="ml-auto h-5 w-px bg-[#1f5c61]" />}
          </div>
        );
      })}
      <div className="ml-[8px] mt-[3px] flex h-7 w-7 items-center justify-center rounded-full bg-[#25a1a8]"><Svg s={14} vb={14}><path d="M7 .5v13M.5 7h13" stroke="#16363a" strokeWidth="1.800" /></Svg></div>
      <div className="ml-auto flex gap-px">
        <div className="flex h-[29px] w-[45px] items-center justify-center bg-[#647270]"><Svg s={12} vb={12}><path d="M1 6.500h10" stroke="#a8b3b1" /></Svg></div>
        <div className="flex h-[29px] w-[45px] items-center justify-center bg-[#647270]"><Svg s={12} vb={12}><path d="M1.500 3.500h7v7h-7zM3.500 3.500v-2h7v7h-2" stroke="#a8b3b1" /></Svg></div>
        <div className="flex h-[29px] w-[45px] items-center justify-center bg-[#647270]"><Svg s={12} vb={12}><path d="m1 1 10 10m0-10L1 11" stroke="#a8b3b1" /></Svg></div>
      </div>
    </div>
  );
}

function Toolbar() {
  return (
    <div className="flex h-[37px] items-center pl-[14px]">
      <Svg s={16} vb={16}><path d="M15 8H2M8 2 2 8l6 6" stroke="#2b4650" strokeWidth="1.800" /></Svg>
      <Svg s={16} vb={16} className="ml-4"><path d="M1 8h13M8 2l6 6-6 6" stroke="#2b4650" strokeWidth="1.800" /></Svg>
      <Svg s={16} vb={16} className="ml-4"><path d="M13 4.500A6 6 0 1 0 14 9" stroke="#000" strokeWidth="2" /><path d="M14.500 1v6h-6z" fill="#000" /></Svg>
      <Svg s={16} vb={16} className="ml-4"><path d="M1.500 8 8 1.500 14.500 8H12.500v6.500h-9V8z" stroke="#000" strokeWidth="1.800" /></Svg>
      <div className="ml-[14px] flex h-7 w-[1672px] items-center rounded-full bg-[#93c2bc] pl-[13px] pr-[10px] text-[13.5px]">
        <Svg s={11} vb={11}><path d="M1.500 4.500h8V11h-8z" fill="#3a4a4b" /><path d="M3.500 5V2.500a2 2 0 0 1 4 0V5" stroke="#3a4a4b" strokeWidth="1.300" /></Svg>
        <T w={103} className="ml-[10px] text-[#1a2627]">docs.google.com</T>
        <T w={980} className="text-[#465c5e]">/forms/d/e/1FAIpQLSdZdqYfIkFgTZUNBWXv6kAjvT3Q2Q6p4MAqbQkahKH-YD60eg/viewscore?viewscore=AE0zAgB22JBby-ynVOJ86t4YdyPcN3gIAewIrxoT2k8r</T>
        <Svg s={16} vb={16} className="ml-auto"><path d="m8 1.500 2 4.700 5 .4-3.800 3.300 1.200 5L8 12.200l-4.400 2.700 1.200-5L1 6.600l5-.4z" stroke="#4b5a5b" strokeWidth="1.300" /></Svg>
      </div>
      <FaPuzzlePiece size={15} color="#000" className="ml-[14px]" />
      <div className="ml-[13px] size-[22px] overflow-hidden rounded-full">
        <Svg s={22} vb={22}><path fill="#dde8ee" d="M0 0h22v22H0z" /><path fill="#8fb6cf" d="M0 10h22v4H0z" /><path fill="#c98e6e" d="M3 22c0-6 3-9 5-9l-.5-6h7l-.5 6c3 0 5 4 5 9z" /><path fill="#3b3734" d="M7 4c2-3 6-3 8 0v2H7z" /><path fill="#444" d="M8 7.500h6V9H8z" /></Svg>
      </div>
      <div className="ml-[19px] flex flex-col gap-[2px]"><i className="size-[3px] rounded-full bg-black" /><i className="size-[3px] rounded-full bg-black" /><i className="size-[3px] rounded-full bg-black" /></div>
    </div>
  );
}

const Zen = () => <Svg s={16} vb={16}><path d="M5 13A6.500 6.500 0 1 1 14 6" stroke="#f0a02a" strokeWidth="1.800" /><path fill="#1674c8" d="M10 3c4 3 5 10 0 12.500-3 0-5-1-6-3 3 0 5-4 6-9.500z" /></Svg>;
const Netflix = () => <Svg s={16} vb={16}><path fill="#b1060f" d="M4 0h3v16H4zM9.500 0h3v16h-3z" /><path fill="#e50914" d="M4 0h3l5.500 16h-3z" /></Svg>;
const Cifra = () => <Svg s={16} vb={16}><path fill="#f58a1f" d="M8 0c5 0 7 1.500 7 4.500S10.500 16 8 16 1 7.500 1 4.500 3 0 8 0z" /><path d="M8 3c-3 0-3 2.500-.5 3.500S7.500 11 5 10M10 3v7c2 1 3-1 2-2.500" stroke="#fff" strokeWidth="1.200" /></Svg>;
const Leste = () => <Svg s={16} vb={16}><path fill="#26333f" d="M0 0h16v16H0z" /><path d="M3 9v4M8.500 7v6" stroke="#fff" strokeWidth="1.800" /><path d="M5.700 8v5" stroke="#f2357b" strokeWidth="1.800" /><path d="M11 5v8" stroke="#f7b52c" strokeWidth="1.800" /><path d="M13 7v6" stroke="#fff" /></Svg>;
const Gmail = () => <Svg s={16} vb={16}><path fill="#f2f2f2" d="M1 3h14v11H1z" /><path d="M2 14V4l6 5.500L14 4v10" stroke="#d93a2f" strokeWidth="2.200" /></Svg>;
const Maps = () => <Svg s={16} vb={16}><path fill="#34a853" d="M1 2h12v6L4 15H1z" /><path fill="#4285f4" d="m6 9 8 6H1z" /><path fill="#fbd04a" d="m1 14 10-9 2 2-9 8H1z" /><path fill="#e8eaed" d="m9 9 5 6V8z" /><path fill="#ea4335" d="M11.500 0A3.700 3.700 0 0 1 15 4c0 2-2.500 3.500-3.500 7C10.500 7.500 8 6 8 4a3.700 3.700 0 0 1 3.500-4z" /><circle cx="11.500" cy="3.800" r="1.200" fill="#7a1712" /></Svg>;
const Trad = () => <Svg s={16} vb={16}><path fill="#dfe1e5" d="M6 4h10v12H9z" /><path fill="#4a86ea" d="M0 0h8l4 13H0z" /><path d="M6.500 4.500A2.300 2.300 0 1 0 7 6.500H5" stroke="#fff" strokeWidth="1.100" /><path d="M10 8h5M12.500 7v1M14 8c-.5 2-2 3.500-3.500 4M11 9.500l3 3" stroke="#5f6368" strokeWidth=".9" /></Svg>;
const Print = () => <Svg s={16} vb={16}><path fill="#eceae6" d="M3 9a3 3 0 0 1 0-5.500 4 4 0 0 1 7-1.500c3-.5 4.500 2 4 4 1.500 1 1 3-1 3z" /><path fill="#9aa0a6" d="M1 9h14v3H1z" /><path fill="#4285f4" d="M3.500 9h9v7h-9z" /><path d="M4 11.500h8M4 14h8" stroke="#fff" /></Svg>;
const YT = () => <Svg s={16} vb={16}><rect x="1" y="2.500" width="14" height="11" rx="2.500" fill="#f00" /><path fill="#fff" d="m6.500 5.500 4.500 2.500-4.500 2.500z" /></Svg>;
const Tele = () => <Svg s={16} vb={16}><circle cx="8" cy="8" r="8" fill="#2fa3df" /><path fill="#fff" d="M3 8 12.500 3.500 11 13 8 10.500 7 12.500 6.500 9z" /></Svg>;
const Renato = () => <Svg s={16} vb={16}><path fill="#4aa3dc" d="M1 1h15v13l-5 1V8L6 12 5 6 1 9z" /><path fill="#1e6376" d="m4 8 7-5-1 4 2 1-5 7z" /></Svg>;
const Star = () => <Svg s={16} vb={16}><path fill="#000" d="m8 1.500 2 4.700 5 .4-3.800 3.300 1.200 5L8 12.200l-4.400 2.700 1.200-5L1 6.600l5-.4z" /></Svg>;
const DarkGlobe = () => <Svg s={16} vb={16}><circle cx="8" cy="8" r="7.500" fill="#05090b" /><path fill="#1e6376" d="M9.500 2.500 13 4.500 12 7 9 8 8 5.500zM2 7l4 1.500 2.500 2L7 14 5.500 11 3 10z" /></Svg>;

const MARKS = [
  [GIcon, "Google", 38, 79], [Zen, "ZenneT - Provedor...", 108, 154], [Whats, "WhatsApp", 55, 96], [DarkGlobe, "", 0, 32], [Shield, "Universidade de Va...", 110, 154],
  [Netflix, "Netflix", 34, 75], [Cifra, "Cifra Club - seu site...", 111, 154], [Leste, "Notícias Do Leste -...", 108, 154], [Gmail, "Gmail", 33, 71], [Maps, "Maps", 29, 70],
  [Trad, "Traduzir", 42, 82], [Print, "Google Cloud Print", 101, 141], [YT, "YouTube", 46, 86], [Tele, "Telegram Web", 75, 116], [Renato, "Renato Russo - cifr...", 108, 154], [Star, "Bookmarks", 58, 118],
];
function Bookmarks() {
  return (
    <div className="flex h-[26px] items-center pl-[14px] text-[11.5px] leading-5 text-[#04090b]">
      {MARKS.map(([I, t, w, cw], i) => (
        <div key={i} className="flex shrink-0 items-center gap-2" style={{ width: cw }}><I />{t ? <T w={w}>{t}</T> : null}</div>
      ))}
      <Svg s={10} vb={10}><path d="m1 1.500 3.500 3.500L1 8.500M5.500 1.500 9 5 5.500 8.500" stroke="#050a0c" strokeWidth="1.600" /></Svg>
      <div className="ml-[9px] h-4 w-px bg-[#2f7f8f]" />
      <Svg s={14} vb={14} className="ml-[10px]"><path fill="#fbe38a" stroke="#f0c93e" d="M1.500.500h11v13h-11z" /><path fill="#f0c93e" d="M10 9h2.500v4.500H10z" /></Svg>
      <T w={101} className="ml-[9px]">Outros marcadores</T>
    </div>
  );
}

function ChromeWindow() {
  return (
    <div className="flex h-[1080px] w-[1920px] flex-col">
      <TabStrip />
      <div className="h-[69px] border-b border-[#4b7f7a] bg-linear-to-b from-[#568a9a] to-[#1e6376] to-38%">
        <Toolbar />
        <Bookmarks />
      </div>
      <div className="flex h-[888px]">
        <div className="relative h-[888px] w-[1903px] overflow-hidden bg-[#a7e1fd] pl-[633px]">
          <div className={CARD + " -mt-[14px] h-[78px]"}><Option label="4" /></div>
          <div className={CARD + " mt-[13px] h-[336px] pt-[23px]"}>
            <Q5 />
            <div className="mt-[28px]">{["Z", "P", "R", "H", "X"].map((l) => <Option key={l} label={l} on={l === "R"} />)}</div>
          </div>
          <div className={CARD + " mt-[14px] h-[560px] pt-[23px]"}>
            <Question a="6 - Na função abaixo, podemos dizer que seu gráfico cruza o eixo das" wa={506} b="ordenadas em um ponto genérico do tipo:" wb={306} />
            <svg width="590" height="260" viewBox="0 0 590 260" fill="none" className="mt-[44px]">
              <path d="M103 137.500H248" stroke="#f0696c" /><path d="M248 138.500H393" stroke="#f79a9c" />
              <path d="M227.500 10V41" stroke="#ee6468" /><path d="M226.500 41V101" stroke="#f28b8e" /><path d="M226 101V162" stroke="#f9cfd0" strokeWidth="2" />
              <path d="M225.500 162V222" stroke="#f28b8e" /><path d="M224.500 222V252" stroke="#ee6468" />
              <path d="M139 44 343 225" stroke="#ec0c10" strokeWidth="2" />
            </svg>
            <div className="mt-[73px]"><Option label="" /></div>
          </div>
          <svg width="20" height="20" viewBox="0 0 20 20" className="absolute left-[14px] top-[850px]">
            <path fill="#4f6673" d="M2 0h16a2 2 0 0 1 2 2v12a2 2 0 0 1-2 2H4l-4 4V2a2 2 0 0 1 2-2z" /><path fill="#a7e1fd" d="M9 4h2v4.500H9zM9 10.500h2v2H9z" />
          </svg>
        </div>
        <div className="flex w-[17px] flex-col items-center bg-[#f1f1f1]">
          <Tri c="#505050" className="mt-[7px] rotate-180" />
          <div className="mt-[401px] h-[184px] w-[15px] bg-[#c1c1c1]" />
          <Tri c="#505050" className="mb-[7px] mt-auto" />
        </div>
      </div>
      <Downloads />
      <TaskbarWide />
    </div>
  );
}

export default function App() {
  return (
    <div className="flex h-[1280px] w-[3280px] items-start overflow-hidden bg-white font-['Open_Sans','Noto_Sans',sans-serif]">
      <div className="h-[1080px] w-[1360px] shrink-0 overflow-hidden bg-black">
        <PaintWindow />
        <div className="flex h-10 bg-linear-to-r from-[#23383f] from-50% to-[#1a2744]">
          <Slot><Win /></Slot><Slot><Search /></Slot><Slot><Cortana /></Slot><Slot><TaskView /></Slot>
          <Apps />
          <div className="ml-auto mr-[6px] flex items-center"><Clock /></div>
        </div>
      </div>
      <ChromeWindow />
    </div>
  );
}
